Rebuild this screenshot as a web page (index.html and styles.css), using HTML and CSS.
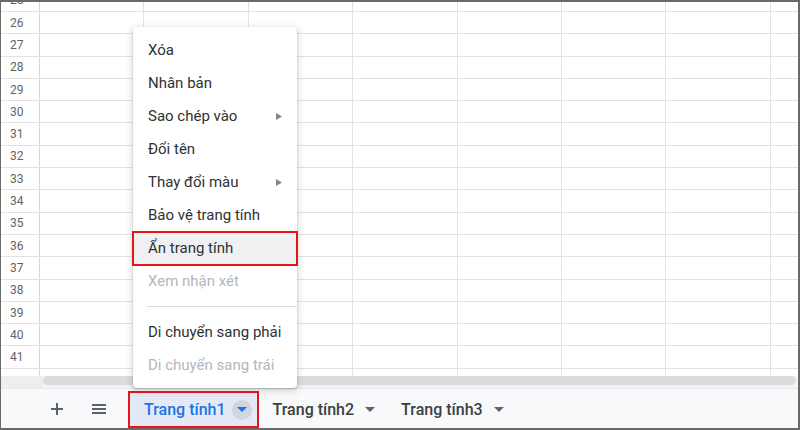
FILE: index.html
```html
<!DOCTYPE html>
<html lang="vi">
<head>
<meta charset="utf-8">
<title>Sheets</title>
<link rel="stylesheet" href="styles.css">
</head>
<body>
<div class="frame">
  <div class="sheet">
    <div class="row first"><div class="rh">25</div><div class="c"></div><div class="c"></div><div class="c"></div><div class="c"></div><div class="c"></div><div class="c"></div><div class="c"></div></div>
    <div class="row"><div class="rh">26</div><div class="c"></div><div class="c"></div><div class="c"></div><div class="c"></div><div class="c"></div><div class="c"></div><div class="c"></div></div>
    <div class="row"><div class="rh">27</div><div class="c"></div><div class="c"></div><div class="c"></div><div class="c"></div><div class="c"></div><div class="c"></div><div class="c"></div></div>
    <div class="row"><div class="rh">28</div><div class="c"></div><div class="c"></div><div class="c"></div><div class="c"></div><div class="c"></div><div class="c"></div><div class="c"></div></div>
    <div class="row"><div class="rh">29</div><div class="c"></div><div class="c"></div><div class="c"></div><div class="c"></div><div class="c"></div><div class="c"></div><div class="c"></div></div>
    <div class="row"><div class="rh">30</div><div class="c"></div><div class="c"></div><div class="c"></div><div class="c"></div><div class="c"></div><div class="c"></div><div class="c"></div></div>
    <div class="row"><div class="rh">31</div><div class="c"></div><div class="c"></div><div class="c"></div><div class="c"></div><div class="c"></div><div class="c"></div><div class="c"></div></div>
    <div class="row"><div class="rh">32</div><div class="c"></div><div class="c"></div><div class="c"></div><div class="c"></div><div class="c"></div><div class="c"></div><div class="c"></div></div>
    <div class="row"><div class="rh">33</div><div class="c"></div><div class="c"></div><div class="c"></div><div class="c"></div><div class="c"></div><div class="c"></div><div class="c"></div></div>
    <div class="row"><div class="rh">34</div><div class="c"></div><div class="c"></div><div class="c"></div><div class="c"></div><div class="c"></div><div class="c"></div><div class="c"></div></div>
    <div class="row"><div class="rh">35</div><div class="c"></div><div class="c"></div><div class="c"></div><div class="c"></div><div class="c"></div><div class="c"></div><div class="c"></div></div>
    <div class="row"><div class="rh">36</div><div class="c"></div><div class="c"></div><div class="c"></div><div class="c"></div><div class="c"></div><div class="c"></div><div class="c"></div></div>
    <div class="row"><div class="rh">37</div><div class="c"></div><div class="c"></div><div class="c"></div><div class="c"></div><div class="c"></div><div class="c"></div><div class="c"></div></div>
    <div class="row"><div class="rh">38</div><div class="c"></div><div class="c"></div><div class="c"></div><div class="c"></div><div class="c"></div><div class="c"></div><div class="c"></div></div>
    <div class="row"><div class="rh">39</div><div class="c"></div><div class="c"></div><div class="c"></div><div class="c"></div><div class="c"></div><div class="c"></div><div class="c"></div></div>
    <div class="row"><div class="rh">40</div><div class="c"></div><div class="c"></div><div class="c"></div><div class="c"></div><div class="c"></div><div class="c"></div><div class="c"></div></div>
    <div class="row"><div class="rh">41</div><div class="c"></div><div class="c"></div><div class="c"></div><div class="c"></div><div class="c"></div><div class="c"></div><div class="c"></div></div>
    <div class="row"><div class="rh"></div><div class="c"></div><div class="c"></div><div class="c"></div><div class="c"></div><div class="c"></div><div class="c"></div><div class="c"></div></div>
  </div>
  <div class="scroll"><div class="scroll-corner"></div><div class="thumb"></div></div>
  <div class="tabbar">
    <div class="tb-btn">
      <svg width="14" height="14" viewBox="0 0 14 14"><path d="M7 1v12M1 7h12" stroke="#5f6368" stroke-width="2"/></svg>
    </div>
    <div class="tb-btn">
      <svg width="16" height="12" viewBox="0 0 16 12"><path d="M1 2h14M1 6h14M1 10h14" stroke="#5f6368" stroke-width="2"/></svg>
    </div>
    <div class="tab active">
      <span class="tab-label">Trang tính1</span>
      <span class="tab-drop">
        <svg width="10" height="5" viewBox="0 0 10 5"><path d="M0 0h10L5 5z" fill="#1a73e8"/></svg>
      </span>
    </div>
    <div class="tab">
      <span class="tab-label">Trang tính2</span>
      <span class="tab-arrow">
        <svg width="10" height="5" viewBox="0 0 10 5"><path d="M0 0h10L5 5z" fill="#5f6368"/></svg>
      </span>
    </div>
    <div class="tab">
      <span class="tab-label">Trang tính3</span>
      <span class="tab-arrow">
        <svg width="10" height="5" viewBox="0 0 10 5"><path d="M0 0h10L5 5z" fill="#5f6368"/></svg>
      </span>
    </div>
  </div>

  <div class="menu">
    <div class="item">Xóa</div>
    <div class="item">Nhân bản</div>
    <div class="item">Sao chép vào<svg class="sub" width="6" height="7" viewBox="0 0 6 7"><path d="M0 0l6 3.5L0 7z" fill="#80868b"/></svg></div>
    <div class="item">Đổi tên</div>
    <div class="item">Thay đổi màu<svg class="sub" width="6" height="7" viewBox="0 0 6 7"><path d="M0 0l6 3.5L0 7z" fill="#80868b"/></svg></div>
    <div class="item">Bảo vệ trang tính</div>
    <div class="item hl">Ẩn trang tính</div>
    <div class="item dis">Xem nhận xét</div>
    <div class="sep"></div>
    <div class="item">Di chuyển sang phải</div>
    <div class="item dis">Di chuyển sang trái</div>
  </div>
</div>
</body>
</html>
```

FILE: styles.css
```css
* { box-sizing: border-box; }
html, body { margin: 0; padding: 0; background: #fff; }
body { font-family: Roboto, "Noto Sans", "Liberation Sans", sans-serif; }

.frame {
  position: relative;
  width: 800px;
  height: 430px;
  border: 2px solid #6a6a6a;
  border-left-width: 1px;
  display: flex;
  flex-direction: column;
  overflow: hidden;
  background: #fff;
}

.sheet {
  height: 374px;
  overflow: hidden;
  flex: none;
}

.row {
  display: grid;
  grid-template-columns: 39px repeat(7, 104.4px);
  height: 22.3px;
  border-bottom: 1px solid #e2e2e2;
}
.row.first { margin-top: -12.3px; }

.rh {
  border-right: 1px solid #d6d6d6;
  font-size: 12px;
  color: #5f6368;
  padding-left: 9px;
  display: flex;
  align-items: center;
}
.c { border-right: 1px solid #e2e2e2; }

.scroll {
  height: 12px;
  flex: none;
  display: flex;
  background: #f1f3f4;
}
.scroll-corner { width: 42px; background: #eeeeee; }
.thumb {
  flex: 1;
  height: 9px;
  margin-right: 2px;
  border-radius: 5px;
  background: #dadce0;
}

.tabbar {
  flex: 1;
  background: #f8f9fa;
  border-top: 1px solid #e8eaed;
  display: flex;
  align-items: center;
  padding-left: 38px;
}
.tb-btn {
  width: 36px;
  height: 36px;
  display: flex;
  align-items: center;
  justify-content: center;
  margin-right: 6px;
}
.tb-btn + .tb-btn { margin-right: 13px; }

.tab {
  height: 33px;
  display: flex;
  align-items: center;
  padding: 0 10px 0 14px;
  font-size: 16px;
  font-weight: 500;
  color: #3c4043;
  margin-top: 4px;
  align-self: flex-start;
}
.tab.active {
  background: #e3eaf6;
  color: #1a73e8;
  outline: 2px solid #e8141b;
  padding-right: 5px;
  margin-right: 2px;
}
.tab-label { white-space: nowrap; }
.tab-drop {
  width: 20px;
  height: 20px;
  border-radius: 50%;
  background: #cfd6e1;
  display: flex;
  align-items: center;
  justify-content: center;
  margin-left: 6px;
}
.tab-arrow {
  width: 14px;
  display: flex;
  justify-content: center;
  margin-left: 9px;
}

.menu {
  position: absolute;
  left: 132px;
  top: 25px;
  width: 164px;
  background: #fff;
  border-radius: 4px;
  box-shadow: 0 2px 6px 2px rgba(60,64,67,.15), 0 1px 2px rgba(60,64,67,.3);
  padding: 6.5px 0;
}
.item {
  height: 33px;
  display: flex;
  align-items: center;
  padding: 0 14px 0 15px;
  font-size: 15px;
  color: #303134;
  white-space: nowrap;
}
.item .sub { margin-left: auto; margin-right: 1px; }
.item.hl {
  background: #eef0f2;
  outline: 2px solid #e8141b;
  outline-offset: -1px;
}
.item.dis { color: #b4b7bb; }
.sep {
  height: 18px;
  margin-left: 14px;
  display: flex;
  align-items: center;
}
.sep::after {
  content: "";
  flex: 1;
  height: 1px;
  background: #dadce0;
}
```
